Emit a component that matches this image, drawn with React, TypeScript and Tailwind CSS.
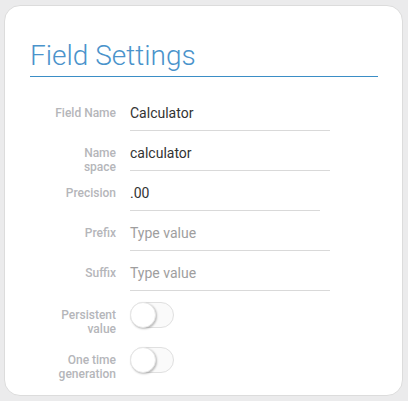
import React from 'react';

interface TextField {
  label: string[];
  value: string;
  placeholder?: boolean;
  width: string;
}

const fields: TextField[] = [
  { label: ['Field Name'], value: 'Calculator', width: 'w-[200px]' },
  { label: ['Name', 'space'], value: 'calculator', width: 'w-[200px]' },
  { label: ['Precision'], value: '.00', width: 'w-[190px]' },
  { label: ['Prefix'], value: 'Type value', placeholder: true, width: 'w-[200px]' },
  { label: ['Suffix'], value: 'Type value', placeholder: true, width: 'w-[200px]' },
];

const toggles = [
  ['Persistent', 'value'],
  ['One time', 'generation'],
];

const Label = ({ lines, className = '' }: { lines: string[]; className?: string }) => (
  <div className={`w-[86px] shrink-0 text-right text-[12px] leading-[14px] font-medium text-[#b5b6ba] ${className}`}>
    {lines.map((l) => (
      <div key={l}>{l}</div>
    ))}
  </div>
);

const Toggle = () => (
  <div className="relative w-[44px] h-[26px] rounded-full border border-[#e0e0e0] bg-[#fafafa]">
    <div className="absolute left-[-1px] top-[-1px] w-[26px] h-[26px] rounded-full border border-[#e6e6e6] bg-white shadow-[1px_1px_2px_rgba(0,0,0,0.25)]" />
  </div>
);

const App = () => {
  return (
    <div className="min-h-[401px] bg-[#ebebec] pt-[5px] pl-[4px]" style={{ fontFamily: 'Roboto, "Noto Sans", sans-serif' }}>
      <div className="w-[399px] h-[391px] rounded-[16px] border border-[#dcdcdc] bg-white pt-[33px] pl-[25px] pr-[24px]">
        {/* 제목 */}
        <div className="border-b border-[#3b8ec6] pb-[4px] text-[28px] leading-[33px] font-light text-[#4a93cb]">
          Field Settings
        </div>

        {/* 입력 필드 */}
        <div className="mt-[25px] flex flex-col gap-[11px]">
          {fields.map((f) => (
            <div key={f.value + f.label.join()} className="flex items-start gap-[14px] h-[29px]">
              <Label lines={f.label} className="pt-[4px]" />
              <div
                className={`${f.width} border-b border-[#d9d9d9] pt-[1px] pb-[7px] text-[14px] leading-[20px] ${
                  f.placeholder ? 'text-[#9e9e9e]' : 'text-[#333333]'
                }`}
              >
                {f.value}
              </div>
            </div>
          ))}

          {/* 토글 */}
          {toggles.map((t) => (
            <div key={t[0]} className="flex items-start gap-[14px]">
              <Label lines={t} className="pt-[6px]" />
              <Toggle />
            </div>
          ))}
        </div>
      </div>
    </div>
  );
};

export default App;
